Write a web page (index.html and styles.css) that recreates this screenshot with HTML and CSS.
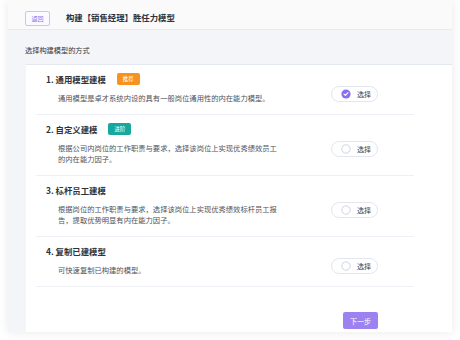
FILE: index.html
```html
<!DOCTYPE html>
<html lang="zh-CN">
<head>
  <meta charset="UTF-8" />
  <title>构建胜任力模型</title>
  <link rel="stylesheet" href="styles.css">
</head>
<body>

  <div class="panel">
    <div class="header">
      <a class="back-btn">返回</a>
      <h1>构建【销售经理】胜任力模型</h1>
    </div>

    <div class="main">
      <p class="section-label">选择构建模型的方式</p>

      <div class="card">
        <div class="option">
          <div class="option-text">
            <h3>1. 通用模型建模 <span class="tag tag-orange">推荐</span></h3>
            <p>通用模型是卓才系统内设的具有一般岗位通用性的内在能力模型。</p>
          </div>
          <a class="pick-btn">
            <svg class="radio" width="10" height="10" viewBox="0 0 10 10">
              <circle cx="5" cy="5" r="4.6" fill="#8a6df0"/>
              <path d="M3 5.1 L4.4 6.4 L7 3.7" fill="none" stroke="#fff" stroke-width="1.1" stroke-linecap="round" stroke-linejoin="round"/>
            </svg>
            选择
          </a>
        </div>

        <div class="option">
          <div class="option-text">
            <h3>2. 自定义建模 <span class="tag tag-teal">进阶</span></h3>
            <p>根据公司内岗位的工作职责与要求，选择该岗位上实现优秀绩效员工的内在能力因子。</p>
          </div>
          <a class="pick-btn">
            <svg class="radio" width="10" height="10" viewBox="0 0 10 10">
              <circle cx="5" cy="5" r="4.2" fill="#fff" stroke="#c9cfdc" stroke-width="0.9"/>
            </svg>
            选择
          </a>
        </div>

        <div class="option">
          <div class="option-text">
            <h3>3. 标杆员工建模</h3>
            <p>根据岗位的工作职责与要求，选择该岗位上实现优秀绩效标杆员工报告，提取优势明显有内在能力因子。</p>
          </div>
          <a class="pick-btn">
            <svg class="radio" width="10" height="10" viewBox="0 0 10 10">
              <circle cx="5" cy="5" r="4.2" fill="#fff" stroke="#c9cfdc" stroke-width="0.9"/>
            </svg>
            选择
          </a>
        </div>

        <div class="option">
          <div class="option-text">
            <h3>4. 复制已建模型</h3>
            <p>可快速复制已构建的模型。</p>
          </div>
          <a class="pick-btn">
            <svg class="radio" width="10" height="10" viewBox="0 0 10 10">
              <circle cx="5" cy="5" r="4.2" fill="#fff" stroke="#c9cfdc" stroke-width="0.9"/>
            </svg>
            选择
          </a>
        </div>

        <div class="footer">
          <a class="next-btn">下一步</a>
        </div>
      </div>
    </div>
  </div>

</body>
</html>
```

FILE: styles.css
```css
* {
  margin: 0;
  padding: 0;
  box-sizing: border-box;
}

html, body {
  height: 100%;
  background: #fff;
  font-family: "Noto Sans CJK SC", "Noto Sans", sans-serif;
  color: #2e323b;
  overflow: hidden;
}

.panel {
  margin-left: 8px;
  width: 444px;
  height: 332px;
  background: #f4f5f8;
  box-shadow: 0 0 10px rgba(0, 0, 0, 0.09);
  overflow: hidden;
}

.header {
  height: 30px;
  background: #fafafa;
  border-bottom: 1px solid #e6eaf1;
  display: flex;
  align-items: center;
  padding-left: 17px;
  gap: 16px;
}

.back-btn {
  display: flex;
  align-items: center;
  justify-content: center;
  width: 25px;
  height: 15px;
  margin-top: 7px;
  border: 1px solid #cdc2f4;
  border-radius: 2px;
  background: #fbfaff;
  color: #8a72e6;
  font-size: 6px;
}

.header h1 {
  font-size: 8.4px;
  font-weight: bold;
  color: #2e323b;
  margin-top: 5px;
}

.main {
  padding-top: 15px;
}

.section-label {
  font-size: 7.2px;
  line-height: 10px;
  padding-left: 17px;
  color: #33363d;
}

.card {
  margin-top: 9px;
  margin-left: 18px;
  background: #fff;
  border-top: 1px solid #e4e9f1;
  padding: 0 38px 0 10px;
  height: 270px;
}

.option {
  display: flex;
  align-items: center;
  border-bottom: 1px solid #eef0f6;
  padding: 8px 0 10px 10px;
}

.option-text {
  flex: 1;
}

.option h3 {
  display: flex;
  align-items: center;
  font-size: 8.4px;
  line-height: 12px;
  font-weight: bold;
  color: #2e323b;
  white-space: pre;
}

.tag {
  display: inline-flex;
  align-items: center;
  justify-content: center;
  width: 23px;
  height: 12px;
  margin-left: 9px;
  border-radius: 2px;
  color: #fff;
  font-size: 5.5px;
  font-weight: normal;
}

.tag-orange {
  background: #f7921e;
}

.tag-teal {
  background: #16a79d;
}

.option p {
  margin-top: 8px;
  padding-left: 12px;
  width: 236px;
  font-size: 7.3px;
  line-height: 11px;
  color: #4f535b;
}

.pick-btn {
  display: flex;
  align-items: center;
  gap: 6px;
  width: 47px;
  height: 16px;
  margin-top: 10px;
  margin-right: 36px;
  padding-left: 9px;
  border: 1px solid #e3e6f0;
  border-radius: 8px;
  font-size: 7px;
  color: #3a3e47;
}

.footer {
  display: flex;
  justify-content: flex-end;
  padding-top: 25px;
  padding-right: 36px;
}

.next-btn {
  display: flex;
  align-items: center;
  justify-content: center;
  width: 35px;
  height: 17px;
  background: #9c82f0;
  border-radius: 2px;
  color: #fff;
  font-size: 7px;
}
```
